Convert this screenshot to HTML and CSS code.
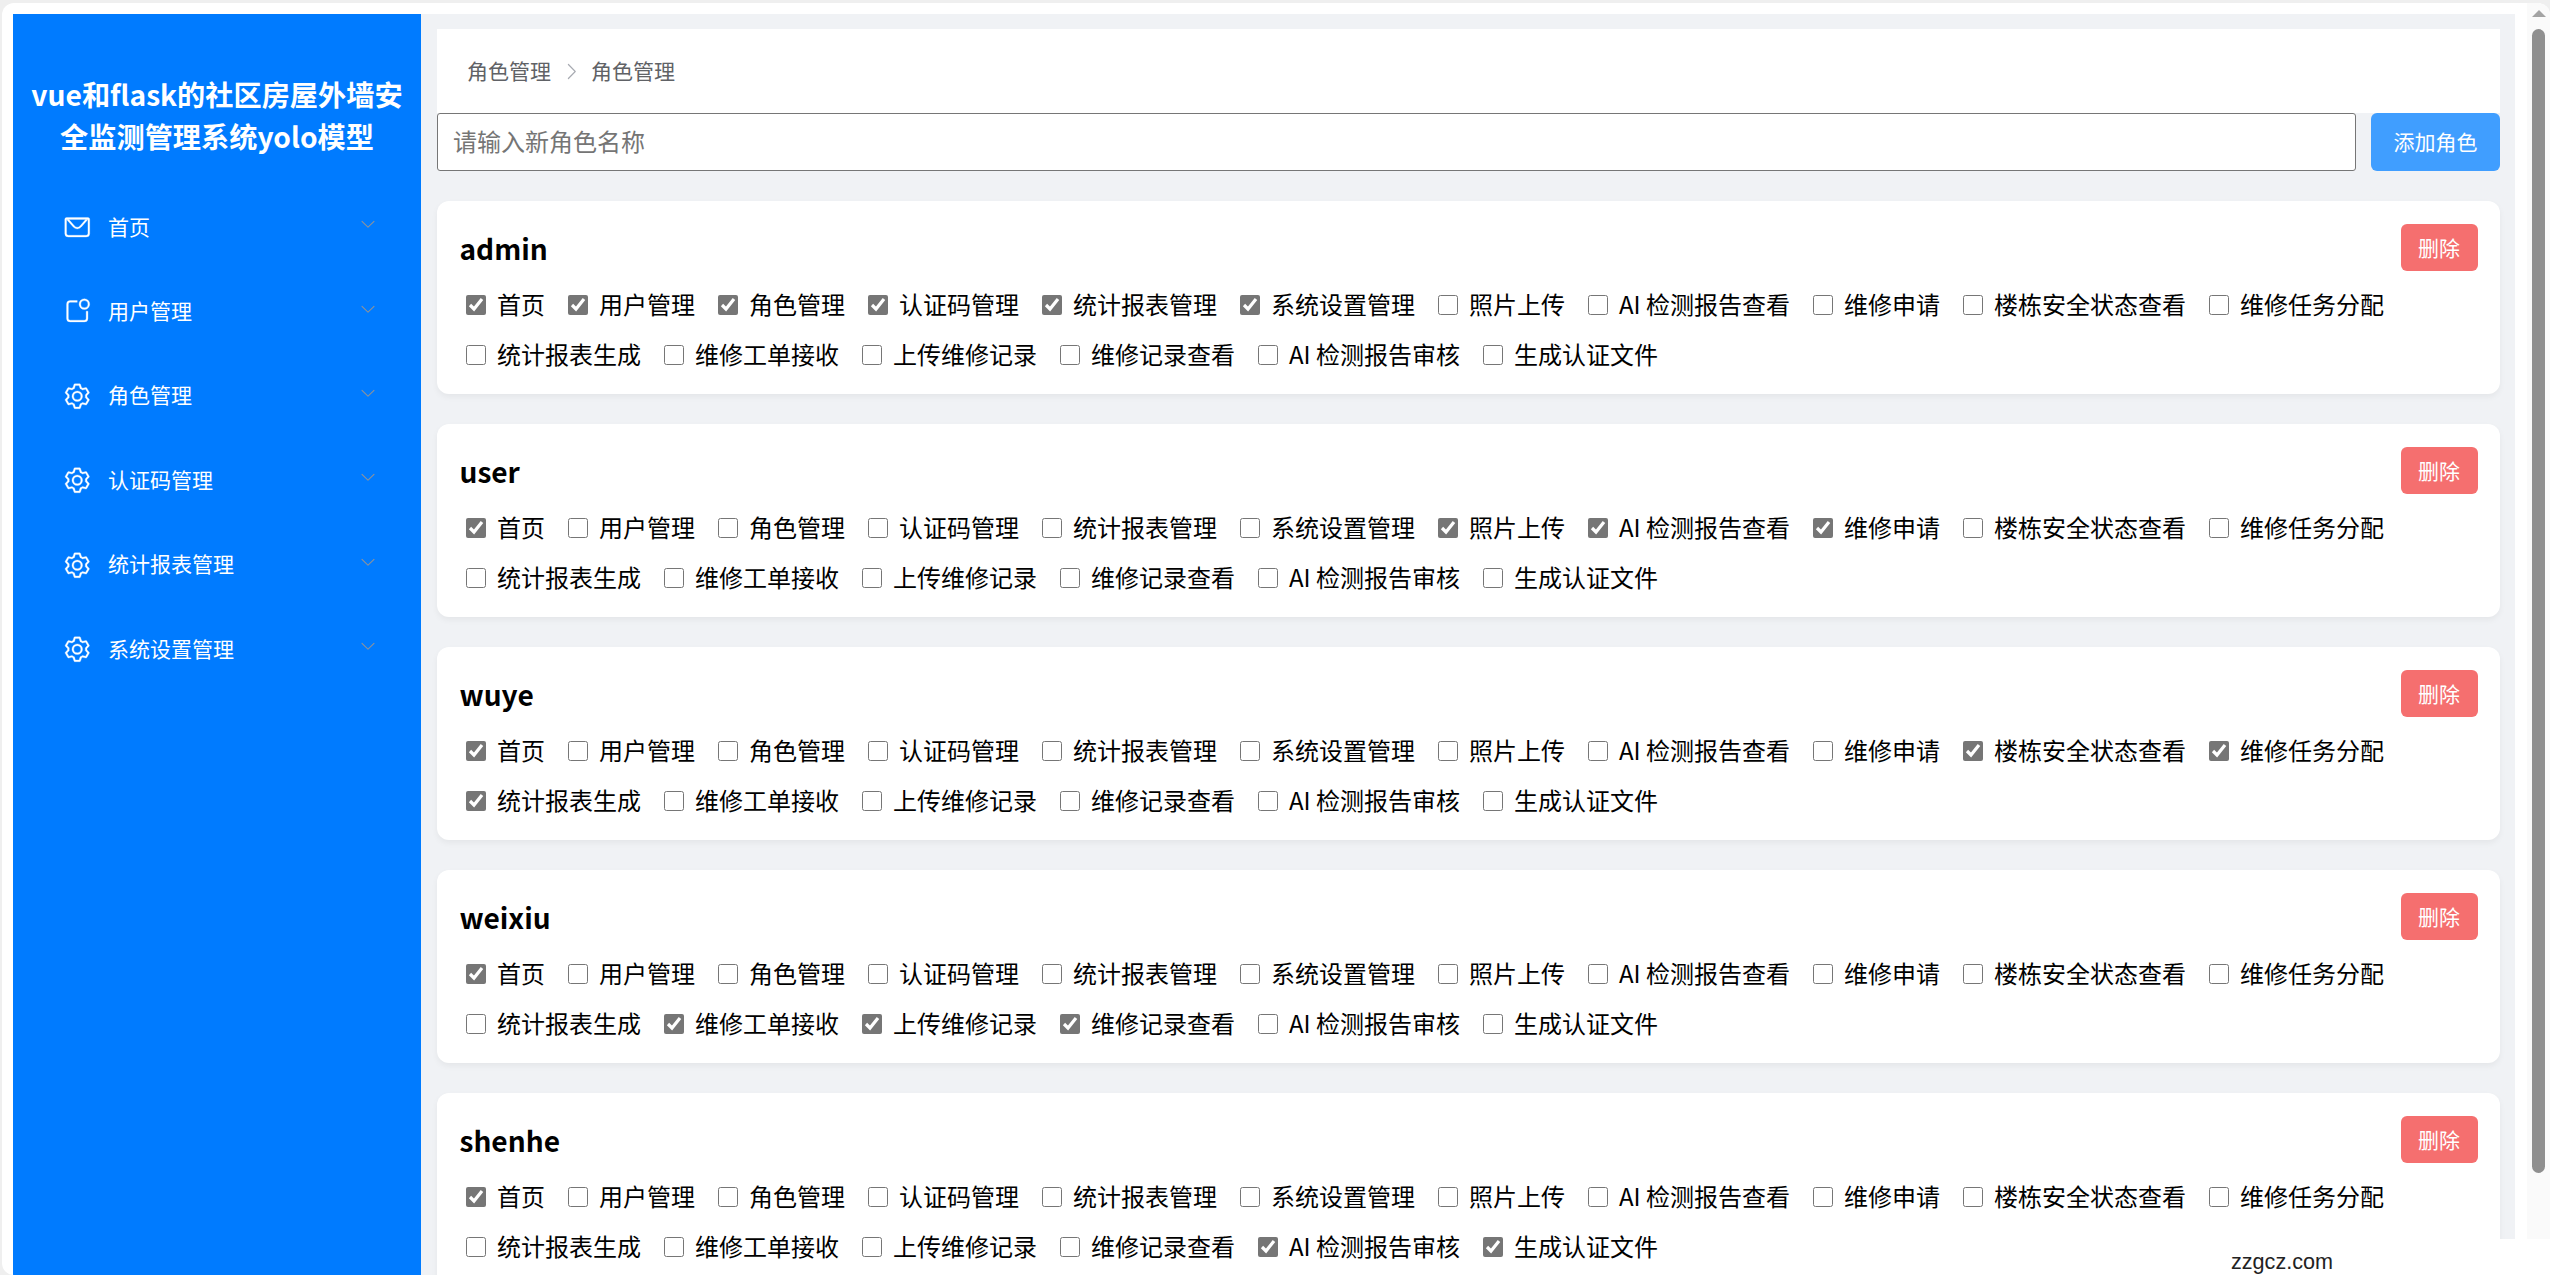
FILE: index.html
```html
<!DOCTYPE html>
<html lang="zh-CN">
<head>
<meta charset="utf-8">
<title>角色管理</title>
<link rel="stylesheet" href="styles.css">
</head>
<body>
<div class="window">
  <aside class="sidebar">
    <h1 class="brand">vue和flask的社区房屋外墙安全监测管理系统yolo模型</h1>
    <nav class="menu">
      <div class="menu-item">
        <svg class="menu-icon" viewBox="0 0 1024 1024"><path fill="currentColor" d="M128 224v512a64 64 0 0 0 64 64h640a64 64 0 0 0 64-64V224zm0-64h768a64 64 0 0 1 64 64v512a128 128 0 0 1-128 128H192A128 128 0 0 1 64 736V224a64 64 0 0 1 64-64"/><path fill="currentColor" d="M904 224 656.512 506.88a192 192 0 0 1-289.024 0L120 224zm-698.944 0 210.56 240.704a128 128 0 0 0 192.704 0L818.944 224z"/></svg>
        <span class="menu-label">首页</span>
        <svg class="menu-arrow" viewBox="0 0 1024 1024"><path fill="currentColor" d="M831.872 340.864 512 652.672 192.128 340.864a30.592 30.592 0 0 0-42.752 0 29.12 29.12 0 0 0 0 41.6L489.664 714.24a32 32 0 0 0 44.672 0l340.288-331.712a29.12 29.12 0 0 0 0-41.6 30.592 30.592 0 0 0-42.752 0z"/></svg>
      </div>
      <div class="menu-item">
        <svg class="menu-icon" viewBox="0 0 1024 1024"><path fill="currentColor" d="M512 128v64H256a64 64 0 0 0-64 64v512a64 64 0 0 0 64 64h512a64 64 0 0 0 64-64V512h64v256a128 128 0 0 1-128 128H256a128 128 0 0 1-128-128V256a128 128 0 0 1 128-128z"/><path fill="currentColor" d="M768 384a128 128 0 1 0 0-256 128 128 0 0 0 0 256m0 64a192 192 0 1 1 0-384 192 192 0 0 1 0 384"/></svg>
        <span class="menu-label">用户管理</span>
        <svg class="menu-arrow" viewBox="0 0 1024 1024"><path fill="currentColor" d="M831.872 340.864 512 652.672 192.128 340.864a30.592 30.592 0 0 0-42.752 0 29.12 29.12 0 0 0 0 41.6L489.664 714.24a32 32 0 0 0 44.672 0l340.288-331.712a29.12 29.12 0 0 0 0-41.6 30.592 30.592 0 0 0-42.752 0z"/></svg>
      </div>
      <div class="menu-item">
        <svg class="menu-icon" viewBox="0 0 1024 1024"><path fill="currentColor" d="M600.704 64a32 32 0 0 1 30.464 22.208l35.2 109.376c14.784 7.232 28.928 15.36 42.432 24.512l112.384-24.192a32 32 0 0 1 34.432 15.36L944.32 364.8a32 32 0 0 1-4.032 37.504l-77.12 85.12a357 357 0 0 1 0 49.024l77.12 85.248a32 32 0 0 1 4.032 37.504l-88.704 153.6a32 32 0 0 1-34.432 15.296L708.8 803.904c-13.44 9.088-27.648 17.28-42.368 24.512l-35.264 109.376A32 32 0 0 1 600.704 960H423.296a32 32 0 0 1-30.464-22.208L357.696 828.48a352 352 0 0 1-42.56-24.64l-112.32 24.256a32 32 0 0 1-34.432-15.36L79.68 659.2a32 32 0 0 1 4.032-37.504l77.12-85.248a357 357 0 0 1 0-48.896l-77.12-85.248A32 32 0 0 1 79.68 364.8l88.704-153.6a32 32 0 0 1 34.432-15.296l112.32 24.256c13.568-9.152 27.776-17.408 42.56-24.64l35.2-109.312A32 32 0 0 1 423.232 64H600.64zm-23.424 64H446.72l-36.352 113.088-24.512 11.968a294 294 0 0 0-34.816 20.096l-22.656 15.36-116.224-25.088-65.28 113.152 79.68 88.192-1.92 27.136a293 293 0 0 0 0 40.192l1.92 27.136-79.808 88.192 65.344 113.152 116.224-25.024 22.656 15.296a294 294 0 0 0 34.816 20.096l24.512 11.968L446.72 896h130.688l36.48-113.152 24.448-11.904a288 288 0 0 0 34.752-20.096l22.592-15.296 116.288 25.024 65.28-113.152-79.744-88.192 1.92-27.136a293 293 0 0 0 0-40.256l-1.92-27.136 79.808-88.128-65.344-113.152-116.288 24.96-22.592-15.232a288 288 0 0 0-34.752-20.096l-24.448-11.904L577.344 128zM512 320a192 192 0 1 1 0 384 192 192 0 0 1 0-384m0 64a128 128 0 1 0 0 256 128 128 0 0 0 0-256"/></svg>
        <span class="menu-label">角色管理</span>
        <svg class="menu-arrow" viewBox="0 0 1024 1024"><path fill="currentColor" d="M831.872 340.864 512 652.672 192.128 340.864a30.592 30.592 0 0 0-42.752 0 29.12 29.12 0 0 0 0 41.6L489.664 714.24a32 32 0 0 0 44.672 0l340.288-331.712a29.12 29.12 0 0 0 0-41.6 30.592 30.592 0 0 0-42.752 0z"/></svg>
      </div>
      <div class="menu-item">
        <svg class="menu-icon" viewBox="0 0 1024 1024"><path fill="currentColor" d="M600.704 64a32 32 0 0 1 30.464 22.208l35.2 109.376c14.784 7.232 28.928 15.36 42.432 24.512l112.384-24.192a32 32 0 0 1 34.432 15.36L944.32 364.8a32 32 0 0 1-4.032 37.504l-77.12 85.12a357 357 0 0 1 0 49.024l77.12 85.248a32 32 0 0 1 4.032 37.504l-88.704 153.6a32 32 0 0 1-34.432 15.296L708.8 803.904c-13.44 9.088-27.648 17.28-42.368 24.512l-35.264 109.376A32 32 0 0 1 600.704 960H423.296a32 32 0 0 1-30.464-22.208L357.696 828.48a352 352 0 0 1-42.56-24.64l-112.32 24.256a32 32 0 0 1-34.432-15.36L79.68 659.2a32 32 0 0 1 4.032-37.504l77.12-85.248a357 357 0 0 1 0-48.896l-77.12-85.248A32 32 0 0 1 79.68 364.8l88.704-153.6a32 32 0 0 1 34.432-15.296l112.32 24.256c13.568-9.152 27.776-17.408 42.56-24.64l35.2-109.312A32 32 0 0 1 423.232 64H600.64zm-23.424 64H446.72l-36.352 113.088-24.512 11.968a294 294 0 0 0-34.816 20.096l-22.656 15.36-116.224-25.088-65.28 113.152 79.68 88.192-1.92 27.136a293 293 0 0 0 0 40.192l1.92 27.136-79.808 88.192 65.344 113.152 116.224-25.024 22.656 15.296a294 294 0 0 0 34.816 20.096l24.512 11.968L446.72 896h130.688l36.48-113.152 24.448-11.904a288 288 0 0 0 34.752-20.096l22.592-15.296 116.288 25.024 65.28-113.152-79.744-88.192 1.92-27.136a293 293 0 0 0 0-40.256l-1.92-27.136 79.808-88.128-65.344-113.152-116.288 24.96-22.592-15.232a288 288 0 0 0-34.752-20.096l-24.448-11.904L577.344 128zM512 320a192 192 0 1 1 0 384 192 192 0 0 1 0-384m0 64a128 128 0 1 0 0 256 128 128 0 0 0 0-256"/></svg>
        <span class="menu-label">认证码管理</span>
        <svg class="menu-arrow" viewBox="0 0 1024 1024"><path fill="currentColor" d="M831.872 340.864 512 652.672 192.128 340.864a30.592 30.592 0 0 0-42.752 0 29.12 29.12 0 0 0 0 41.6L489.664 714.24a32 32 0 0 0 44.672 0l340.288-331.712a29.12 29.12 0 0 0 0-41.6 30.592 30.592 0 0 0-42.752 0z"/></svg>
      </div>
      <div class="menu-item">
        <svg class="menu-icon" viewBox="0 0 1024 1024"><path fill="currentColor" d="M600.704 64a32 32 0 0 1 30.464 22.208l35.2 109.376c14.784 7.232 28.928 15.36 42.432 24.512l112.384-24.192a32 32 0 0 1 34.432 15.36L944.32 364.8a32 32 0 0 1-4.032 37.504l-77.12 85.12a357 357 0 0 1 0 49.024l77.12 85.248a32 32 0 0 1 4.032 37.504l-88.704 153.6a32 32 0 0 1-34.432 15.296L708.8 803.904c-13.44 9.088-27.648 17.28-42.368 24.512l-35.264 109.376A32 32 0 0 1 600.704 960H423.296a32 32 0 0 1-30.464-22.208L357.696 828.48a352 352 0 0 1-42.56-24.64l-112.32 24.256a32 32 0 0 1-34.432-15.36L79.68 659.2a32 32 0 0 1 4.032-37.504l77.12-85.248a357 357 0 0 1 0-48.896l-77.12-85.248A32 32 0 0 1 79.68 364.8l88.704-153.6a32 32 0 0 1 34.432-15.296l112.32 24.256c13.568-9.152 27.776-17.408 42.56-24.64l35.2-109.312A32 32 0 0 1 423.232 64H600.64zm-23.424 64H446.72l-36.352 113.088-24.512 11.968a294 294 0 0 0-34.816 20.096l-22.656 15.36-116.224-25.088-65.28 113.152 79.68 88.192-1.92 27.136a293 293 0 0 0 0 40.192l1.92 27.136-79.808 88.192 65.344 113.152 116.224-25.024 22.656 15.296a294 294 0 0 0 34.816 20.096l24.512 11.968L446.72 896h130.688l36.48-113.152 24.448-11.904a288 288 0 0 0 34.752-20.096l22.592-15.296 116.288 25.024 65.28-113.152-79.744-88.192 1.92-27.136a293 293 0 0 0 0-40.256l-1.92-27.136 79.808-88.128-65.344-113.152-116.288 24.96-22.592-15.232a288 288 0 0 0-34.752-20.096l-24.448-11.904L577.344 128zM512 320a192 192 0 1 1 0 384 192 192 0 0 1 0-384m0 64a128 128 0 1 0 0 256 128 128 0 0 0 0-256"/></svg>
        <span class="menu-label">统计报表管理</span>
        <svg class="menu-arrow" viewBox="0 0 1024 1024"><path fill="currentColor" d="M831.872 340.864 512 652.672 192.128 340.864a30.592 30.592 0 0 0-42.752 0 29.12 29.12 0 0 0 0 41.6L489.664 714.24a32 32 0 0 0 44.672 0l340.288-331.712a29.12 29.12 0 0 0 0-41.6 30.592 30.592 0 0 0-42.752 0z"/></svg>
      </div>
      <div class="menu-item">
        <svg class="menu-icon" viewBox="0 0 1024 1024"><path fill="currentColor" d="M600.704 64a32 32 0 0 1 30.464 22.208l35.2 109.376c14.784 7.232 28.928 15.36 42.432 24.512l112.384-24.192a32 32 0 0 1 34.432 15.36L944.32 364.8a32 32 0 0 1-4.032 37.504l-77.12 85.12a357 357 0 0 1 0 49.024l77.12 85.248a32 32 0 0 1 4.032 37.504l-88.704 153.6a32 32 0 0 1-34.432 15.296L708.8 803.904c-13.44 9.088-27.648 17.28-42.368 24.512l-35.264 109.376A32 32 0 0 1 600.704 960H423.296a32 32 0 0 1-30.464-22.208L357.696 828.48a352 352 0 0 1-42.56-24.64l-112.32 24.256a32 32 0 0 1-34.432-15.36L79.68 659.2a32 32 0 0 1 4.032-37.504l77.12-85.248a357 357 0 0 1 0-48.896l-77.12-85.248A32 32 0 0 1 79.68 364.8l88.704-153.6a32 32 0 0 1 34.432-15.296l112.32 24.256c13.568-9.152 27.776-17.408 42.56-24.64l35.2-109.312A32 32 0 0 1 423.232 64H600.64zm-23.424 64H446.72l-36.352 113.088-24.512 11.968a294 294 0 0 0-34.816 20.096l-22.656 15.36-116.224-25.088-65.28 113.152 79.68 88.192-1.92 27.136a293 293 0 0 0 0 40.192l1.92 27.136-79.808 88.192 65.344 113.152 116.224-25.024 22.656 15.296a294 294 0 0 0 34.816 20.096l24.512 11.968L446.72 896h130.688l36.48-113.152 24.448-11.904a288 288 0 0 0 34.752-20.096l22.592-15.296 116.288 25.024 65.28-113.152-79.744-88.192 1.92-27.136a293 293 0 0 0 0-40.256l-1.92-27.136 79.808-88.128-65.344-113.152-116.288 24.96-22.592-15.232a288 288 0 0 0-34.752-20.096l-24.448-11.904L577.344 128zM512 320a192 192 0 1 1 0 384 192 192 0 0 1 0-384m0 64a128 128 0 1 0 0 256 128 128 0 0 0 0-256"/></svg>
        <span class="menu-label">系统设置管理</span>
        <svg class="menu-arrow" viewBox="0 0 1024 1024"><path fill="currentColor" d="M831.872 340.864 512 652.672 192.128 340.864a30.592 30.592 0 0 0-42.752 0 29.12 29.12 0 0 0 0 41.6L489.664 714.24a32 32 0 0 0 44.672 0l340.288-331.712a29.12 29.12 0 0 0 0-41.6 30.592 30.592 0 0 0-42.752 0z"/></svg>
      </div>
    </nav>
  </aside>

  <main class="main">
    <div class="crumbs">
      <span class="crumb">角色管理</span>
      <svg class="crumb-sep" viewBox="0 0 1024 1024"><path fill="currentColor" d="M340.864 149.312a30.592 30.592 0 0 0 0 42.752L652.736 512 340.864 831.872a30.592 30.592 0 0 0 0 42.752 29.12 29.12 0 0 0 41.728 0L714.24 534.336a32 32 0 0 0 0-44.672L382.592 149.376a29.12 29.12 0 0 0-41.728 0z"/></svg>
      <span class="crumb">角色管理</span>
    </div>
    <div class="toolbar">
      <input class="role-input" type="text" placeholder="请输入新角色名称">
      <button class="btn btn-add" type="button">添加角色</button>
    </div>

    <section class="card">
      <div class="card-head"><h3 class="role-name">admin</h3><button class="btn btn-del" type="button">删除</button></div>
      <div class="perms">
        <label class="perm"><input type="checkbox" checked><span>首页</span></label>
        <label class="perm"><input type="checkbox" checked><span>用户管理</span></label>
        <label class="perm"><input type="checkbox" checked><span>角色管理</span></label>
        <label class="perm"><input type="checkbox" checked><span>认证码管理</span></label>
        <label class="perm"><input type="checkbox" checked><span>统计报表管理</span></label>
        <label class="perm"><input type="checkbox" checked><span>系统设置管理</span></label>
        <label class="perm"><input type="checkbox"><span>照片上传</span></label>
        <label class="perm"><input type="checkbox"><span>AI 检测报告查看</span></label>
        <label class="perm"><input type="checkbox"><span>维修申请</span></label>
        <label class="perm"><input type="checkbox"><span>楼栋安全状态查看</span></label>
        <label class="perm"><input type="checkbox"><span>维修任务分配</span></label>
        <label class="perm"><input type="checkbox"><span>统计报表生成</span></label>
        <label class="perm"><input type="checkbox"><span>维修工单接收</span></label>
        <label class="perm"><input type="checkbox"><span>上传维修记录</span></label>
        <label class="perm"><input type="checkbox"><span>维修记录查看</span></label>
        <label class="perm"><input type="checkbox"><span>AI 检测报告审核</span></label>
        <label class="perm"><input type="checkbox"><span>生成认证文件</span></label>
      </div>
    </section>

    <section class="card">
      <div class="card-head"><h3 class="role-name">user</h3><button class="btn btn-del" type="button">删除</button></div>
      <div class="perms">
        <label class="perm"><input type="checkbox" checked><span>首页</span></label>
        <label class="perm"><input type="checkbox"><span>用户管理</span></label>
        <label class="perm"><input type="checkbox"><span>角色管理</span></label>
        <label class="perm"><input type="checkbox"><span>认证码管理</span></label>
        <label class="perm"><input type="checkbox"><span>统计报表管理</span></label>
        <label class="perm"><input type="checkbox"><span>系统设置管理</span></label>
        <label class="perm"><input type="checkbox" checked><span>照片上传</span></label>
        <label class="perm"><input type="checkbox" checked><span>AI 检测报告查看</span></label>
        <label class="perm"><input type="checkbox" checked><span>维修申请</span></label>
        <label class="perm"><input type="checkbox"><span>楼栋安全状态查看</span></label>
        <label class="perm"><input type="checkbox"><span>维修任务分配</span></label>
        <label class="perm"><input type="checkbox"><span>统计报表生成</span></label>
        <label class="perm"><input type="checkbox"><span>维修工单接收</span></label>
        <label class="perm"><input type="checkbox"><span>上传维修记录</span></label>
        <label class="perm"><input type="checkbox"><span>维修记录查看</span></label>
        <label class="perm"><input type="checkbox"><span>AI 检测报告审核</span></label>
        <label class="perm"><input type="checkbox"><span>生成认证文件</span></label>
      </div>
    </section>

    <section class="card">
      <div class="card-head"><h3 class="role-name">wuye</h3><button class="btn btn-del" type="button">删除</button></div>
      <div class="perms">
        <label class="perm"><input type="checkbox" checked><span>首页</span></label>
        <label class="perm"><input type="checkbox"><span>用户管理</span></label>
        <label class="perm"><input type="checkbox"><span>角色管理</span></label>
        <label class="perm"><input type="checkbox"><span>认证码管理</span></label>
        <label class="perm"><input type="checkbox"><span>统计报表管理</span></label>
        <label class="perm"><input type="checkbox"><span>系统设置管理</span></label>
        <label class="perm"><input type="checkbox"><span>照片上传</span></label>
        <label class="perm"><input type="checkbox"><span>AI 检测报告查看</span></label>
        <label class="perm"><input type="checkbox"><span>维修申请</span></label>
        <label class="perm"><input type="checkbox" checked><span>楼栋安全状态查看</span></label>
        <label class="perm"><input type="checkbox" checked><span>维修任务分配</span></label>
        <label class="perm"><input type="checkbox" checked><span>统计报表生成</span></label>
        <label class="perm"><input type="checkbox"><span>维修工单接收</span></label>
        <label class="perm"><input type="checkbox"><span>上传维修记录</span></label>
        <label class="perm"><input type="checkbox"><span>维修记录查看</span></label>
        <label class="perm"><input type="checkbox"><span>AI 检测报告审核</span></label>
        <label class="perm"><input type="checkbox"><span>生成认证文件</span></label>
      </div>
    </section>

    <section class="card">
      <div class="card-head"><h3 class="role-name">weixiu</h3><button class="btn btn-del" type="button">删除</button></div>
      <div class="perms">
        <label class="perm"><input type="checkbox" checked><span>首页</span></label>
        <label class="perm"><input type="checkbox"><span>用户管理</span></label>
        <label class="perm"><input type="checkbox"><span>角色管理</span></label>
        <label class="perm"><input type="checkbox"><span>认证码管理</span></label>
        <label class="perm"><input type="checkbox"><span>统计报表管理</span></label>
        <label class="perm"><input type="checkbox"><span>系统设置管理</span></label>
        <label class="perm"><input type="checkbox"><span>照片上传</span></label>
        <label class="perm"><input type="checkbox"><span>AI 检测报告查看</span></label>
        <label class="perm"><input type="checkbox"><span>维修申请</span></label>
        <label class="perm"><input type="checkbox"><span>楼栋安全状态查看</span></label>
        <label class="perm"><input type="checkbox"><span>维修任务分配</span></label>
        <label class="perm"><input type="checkbox"><span>统计报表生成</span></label>
        <label class="perm"><input type="checkbox" checked><span>维修工单接收</span></label>
        <label class="perm"><input type="checkbox" checked><span>上传维修记录</span></label>
        <label class="perm"><input type="checkbox" checked><span>维修记录查看</span></label>
        <label class="perm"><input type="checkbox"><span>AI 检测报告审核</span></label>
        <label class="perm"><input type="checkbox"><span>生成认证文件</span></label>
      </div>
    </section>

    <section class="card">
      <div class="card-head"><h3 class="role-name">shenhe</h3><button class="btn btn-del" type="button">删除</button></div>
      <div class="perms">
        <label class="perm"><input type="checkbox" checked><span>首页</span></label>
        <label class="perm"><input type="checkbox"><span>用户管理</span></label>
        <label class="perm"><input type="checkbox"><span>角色管理</span></label>
        <label class="perm"><input type="checkbox"><span>认证码管理</span></label>
        <label class="perm"><input type="checkbox"><span>统计报表管理</span></label>
        <label class="perm"><input type="checkbox"><span>系统设置管理</span></label>
        <label class="perm"><input type="checkbox"><span>照片上传</span></label>
        <label class="perm"><input type="checkbox"><span>AI 检测报告查看</span></label>
        <label class="perm"><input type="checkbox"><span>维修申请</span></label>
        <label class="perm"><input type="checkbox"><span>楼栋安全状态查看</span></label>
        <label class="perm"><input type="checkbox"><span>维修任务分配</span></label>
        <label class="perm"><input type="checkbox"><span>统计报表生成</span></label>
        <label class="perm"><input type="checkbox"><span>维修工单接收</span></label>
        <label class="perm"><input type="checkbox"><span>上传维修记录</span></label>
        <label class="perm"><input type="checkbox"><span>维修记录查看</span></label>
        <label class="perm"><input type="checkbox" checked><span>AI 检测报告审核</span></label>
        <label class="perm"><input type="checkbox" checked><span>生成认证文件</span></label>
      </div>
    </section>
  </main>

  <div class="gutter">
    <div class="track">
      <span class="track-arrow"></span>
      <span class="track-thumb"></span>
    </div>
  </div>
</div>
<div class="watermark">zzgcz.com</div>
</body>
</html>
```

FILE: styles.css
```css
* { box-sizing: border-box; }

html, body { height: 100%; }

body {
  margin: 0;
  overflow: hidden;
  position: relative;
  background: #efefef;
  font-family: "Noto Sans CJK SC", "Noto Sans", sans-serif;
  color: #000;
}

.window {
  display: flex;
  height: calc(100vh - 3px);
  margin: 3px 0 0 2px;
  padding-left: 11px;
  background: #fff;
  border-radius: 12px;
  overflow: hidden;
}

.sidebar {
  flex: 0 0 408px;
  margin-top: 11px;
  background: #007bff;
  color: #fff;
}

.brand {
  margin: 0;
  padding: 58.5px 12px 28.5px;
  font-size: 28.2px;
  line-height: 42px;
  font-weight: 700;
  text-align: center;
}

.menu-item {
  display: flex;
  align-items: center;
  height: 84.4px;
  padding: 0 44.5px 0 49.5px;
  font-size: 21px;
}

.menu-icon {
  flex: 0 0 28.5px;
  width: 28.5px;
  height: 28.5px;
  margin-right: 17px;
}

.menu-icon path {
  stroke: currentColor;
  stroke-width: 10;
}

.menu-label {
  flex: 1;
  padding-bottom: 3px;
}

.menu-arrow {
  flex: 0 0 18px;
  width: 18px;
  height: 18px;
  margin-bottom: 6px;
  color: #909399;
}

.main {
  flex: 1;
  min-width: 0;
  margin-top: 11px;
  padding: 15px 15px 0 16px;
  background: #f0f2f5;
  overflow: hidden;
}

.crumbs {
  display: flex;
  align-items: center;
  height: 84px;
  padding: 0 30px;
  background: #fff;
  font-size: 21px;
  color: #606266;
}

.crumb {
  padding-bottom: 3px;
}

.crumb-sep {
  width: 21px;
  height: 21px;
  margin: 0 9.5px;
  color: #a8abb2;
}

.toolbar {
  display: flex;
  gap: 15px;
  height: 58px;
  margin-bottom: 30px;
}

.role-input {
  flex: 1;
  min-width: 0;
  padding: 0 15px 3px;
  border: 1.5px solid #767676;
  border-radius: 3px;
  background: #fff;
  font: inherit;
  font-size: 24px;
}

.role-input::placeholder {
  color: #757575;
}

.btn {
  border: 0;
  color: #fff;
  font: inherit;
  font-size: 21px;
  padding: 0;
  border-radius: 6px;
}

.btn-add {
  flex: 0 0 129px;
  padding-bottom: 2px;
  background: #409eff;
}

.btn-del {
  flex: 0 0 77px;
  height: 47px;
  background: #f56f6f;
}

.card {
  margin-bottom: 30px;
  padding: 22.5px;
  height: 193px;
  background: #fff;
  border-radius: 12px;
  box-shadow: 0 3px 6px rgba(0, 0, 0, 0.05);
}

.card-head {
  display: flex;
  justify-content: space-between;
  align-items: center;
  height: 47px;
}

.role-name {
  margin: 0;
  font-size: 28.08px;
  font-weight: 700;
}

.perms {
  display: flex;
  flex-wrap: wrap;
  gap: 17px 16.5px;
  margin-top: 17.5px;
}

.perm {
  display: flex;
  align-items: center;
  height: 33px;
  font-size: 24px;
  line-height: 33px;
}

.perm input {
  width: 20px;
  height: 20px;
  margin: 0 4px 0 6px;
  accent-color: #767676;
}

.perm span {
  margin-left: 7.5px;
  padding-bottom: 2px;
}

.gutter {
  flex: 0 0 35px;
  padding-left: 12px;
}

.track {
  display: flex;
  flex-direction: column;
  align-items: center;
  height: 100%;
  background: #fafafa;
}

.track-arrow {
  width: 0;
  height: 0;
  margin-top: 7px;
  border-left: 7.5px solid transparent;
  border-right: 7.5px solid transparent;
  border-bottom: 7px solid #a3a3a3;
}

.track-thumb {
  width: 13px;
  height: 1144px;
  margin-top: 12px;
  background: #8f8f8f;
  border-radius: 7px;
}

.watermark {
  position: absolute;
  right: 0;
  bottom: 0;
  width: 450px;
  height: 36px;
  padding-left: 131px;
  background: #fff;
  font-family: "Liberation Sans", Arial, sans-serif;
  font-size: 21.6px;
  line-height: 46px;
  color: #222;
}
```
